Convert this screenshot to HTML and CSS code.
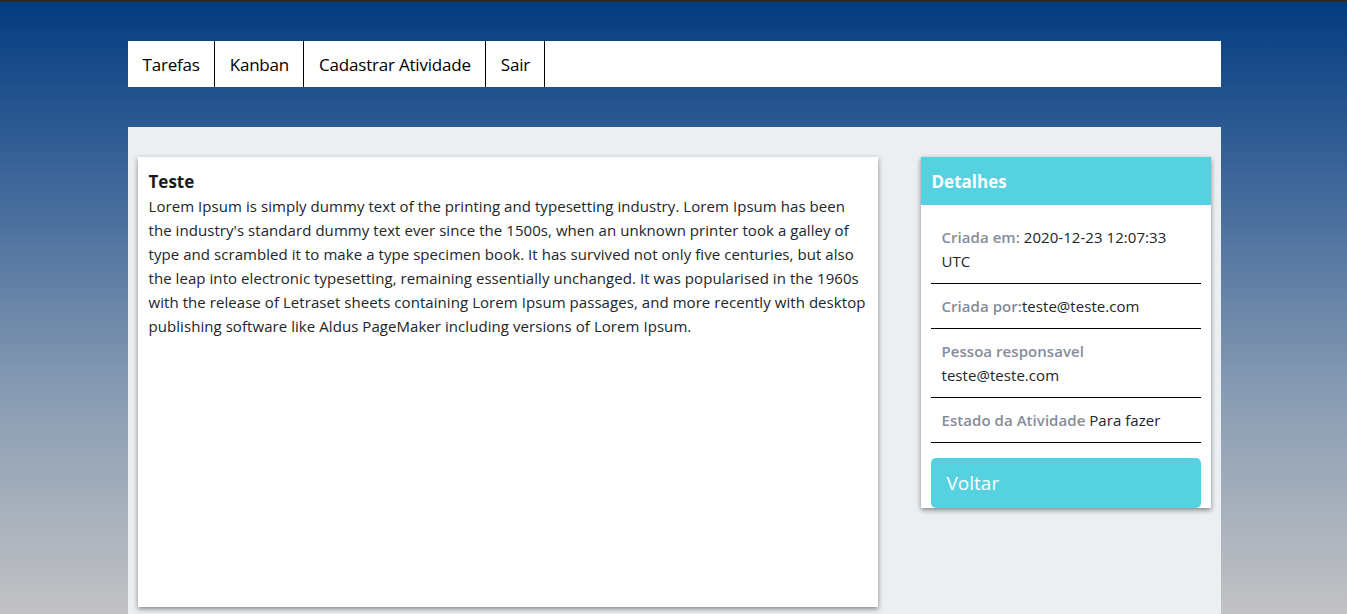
FILE: index.html
```html
<!DOCTYPE html>
<html lang="pt">
<head>
<meta charset="utf-8">
<title>Atividade</title>
<link rel="stylesheet" href="styles.css">
</head>
<body>
<div class="page">
  <nav class="nav">
    <a class="nav-item" href="#">Tarefas</a>
    <a class="nav-item" href="#">Kanban</a>
    <a class="nav-item" href="#">Cadastrar Atividade</a>
    <a class="nav-item" href="#">Sair</a>
  </nav>
  <main class="main">
    <section class="card-task">
      <h2 class="task-title">Teste</h2>
      <p class="task-text">Lorem Ipsum is simply dummy text of the printing and typesetting industry. Lorem Ipsum has been the industry's standard dummy text ever since the 1500s, when an unknown printer took a galley of type and scrambled it to make a type specimen book. It has survived not only five centuries, but also the leap into electronic typesetting, remaining essentially unchanged. It was popularised in the 1960s with the release of Letraset sheets containing Lorem Ipsum passages, and more recently with desktop publishing software like Aldus PageMaker including versions of Lorem Ipsum.</p>
    </section>
    <aside class="card-details">
      <div class="details-header">Detalhes</div>
      <div class="details-body">
        <div class="detail"><span class="label">Criada em:</span> 2020-12-23 12:07:33 UTC</div>
        <div class="detail"><span class="label">Criada por:</span>teste@teste.com</div>
        <div class="detail"><span class="label">Pessoa responsavel</span><br>teste@teste.com</div>
        <div class="detail"><span class="label">Estado da Atividade</span> Para fazer</div>
        <a class="btn-back" href="#">Voltar</a>
      </div>
    </aside>
  </main>
</div>
</body>
</html>
```
FILE: styles.css
```css
html, body {
  margin: 0;
  padding: 0;
  height: 100%;
}
body {
  font-family: "Open Sans", "Noto Sans", sans-serif;
  color: #212529;
  background: linear-gradient(to bottom, #033b80 0%, #3f679a 30%, #8a9db4 65%, #c2c2c4 100%);
  border-top: 2px solid #2b2b2b;
  box-sizing: border-box;
  overflow: hidden;
  padding-left: 1px;
}
.page {
  width: 1093px;
  margin: 0 auto;
  padding-top: 39px;
}
.nav {
  display: flex;
  background: #fff;
  height: 46px;
}
.nav-item {
  display: flex;
  align-items: center;
  padding: 0 14px 0 15px;
  border-right: 1px solid #000;
  color: #000;
  text-decoration: none;
  font-size: 17px;
  letter-spacing: -0.2px;
}
.main {
  margin-top: 40px;
  background: #ebeff2;
  padding: 30px 10px 0;
  height: 497px;
  display: flex;
  justify-content: space-between;
  align-items: flex-start;
}
.card-task {
  width: 740px;
  height: 450px;
  box-sizing: border-box;
  background: #fff;
  box-shadow: 0 2px 5px rgba(0,0,0,0.45);
  padding: 13px 11px 12px;
}
.task-title {
  margin: 0;
  font-size: 17px;
  font-weight: 700;
  line-height: 24px;
  color: #1a1a1a;
}
.task-text {
  margin: 0;
  font-size: 15px;
  line-height: 24px;
  letter-spacing: 0.06px;
}
.card-details {
  width: 290px;
  background: #fff;
  box-shadow: 0 2px 5px rgba(0,0,0,0.45);
  overflow: hidden;
}
.details-header {
  background: #56d1e0;
  color: #fff;
  font-weight: 700;
  font-size: 17px;
  height: 48px;
  line-height: 50px;
  padding: 0 11px;
}
.details-body {
  padding: 10px 10px 0;
}
.detail {
  padding: 10px 11px;
  border-bottom: 1px solid #000;
  font-size: 15px;
  line-height: 24px;
  letter-spacing: 0.05px;
}
.label {
  color: #868c99;
  font-weight: 600;
}
.btn-back {
  display: block;
  margin-top: 15px;
  height: 50px;
  line-height: 50px;
  background: #56d1e0;
  border-radius: 5px;
  color: #fff;
  text-decoration: none;
  font-size: 19px;
  padding: 0 16px;
}
```
